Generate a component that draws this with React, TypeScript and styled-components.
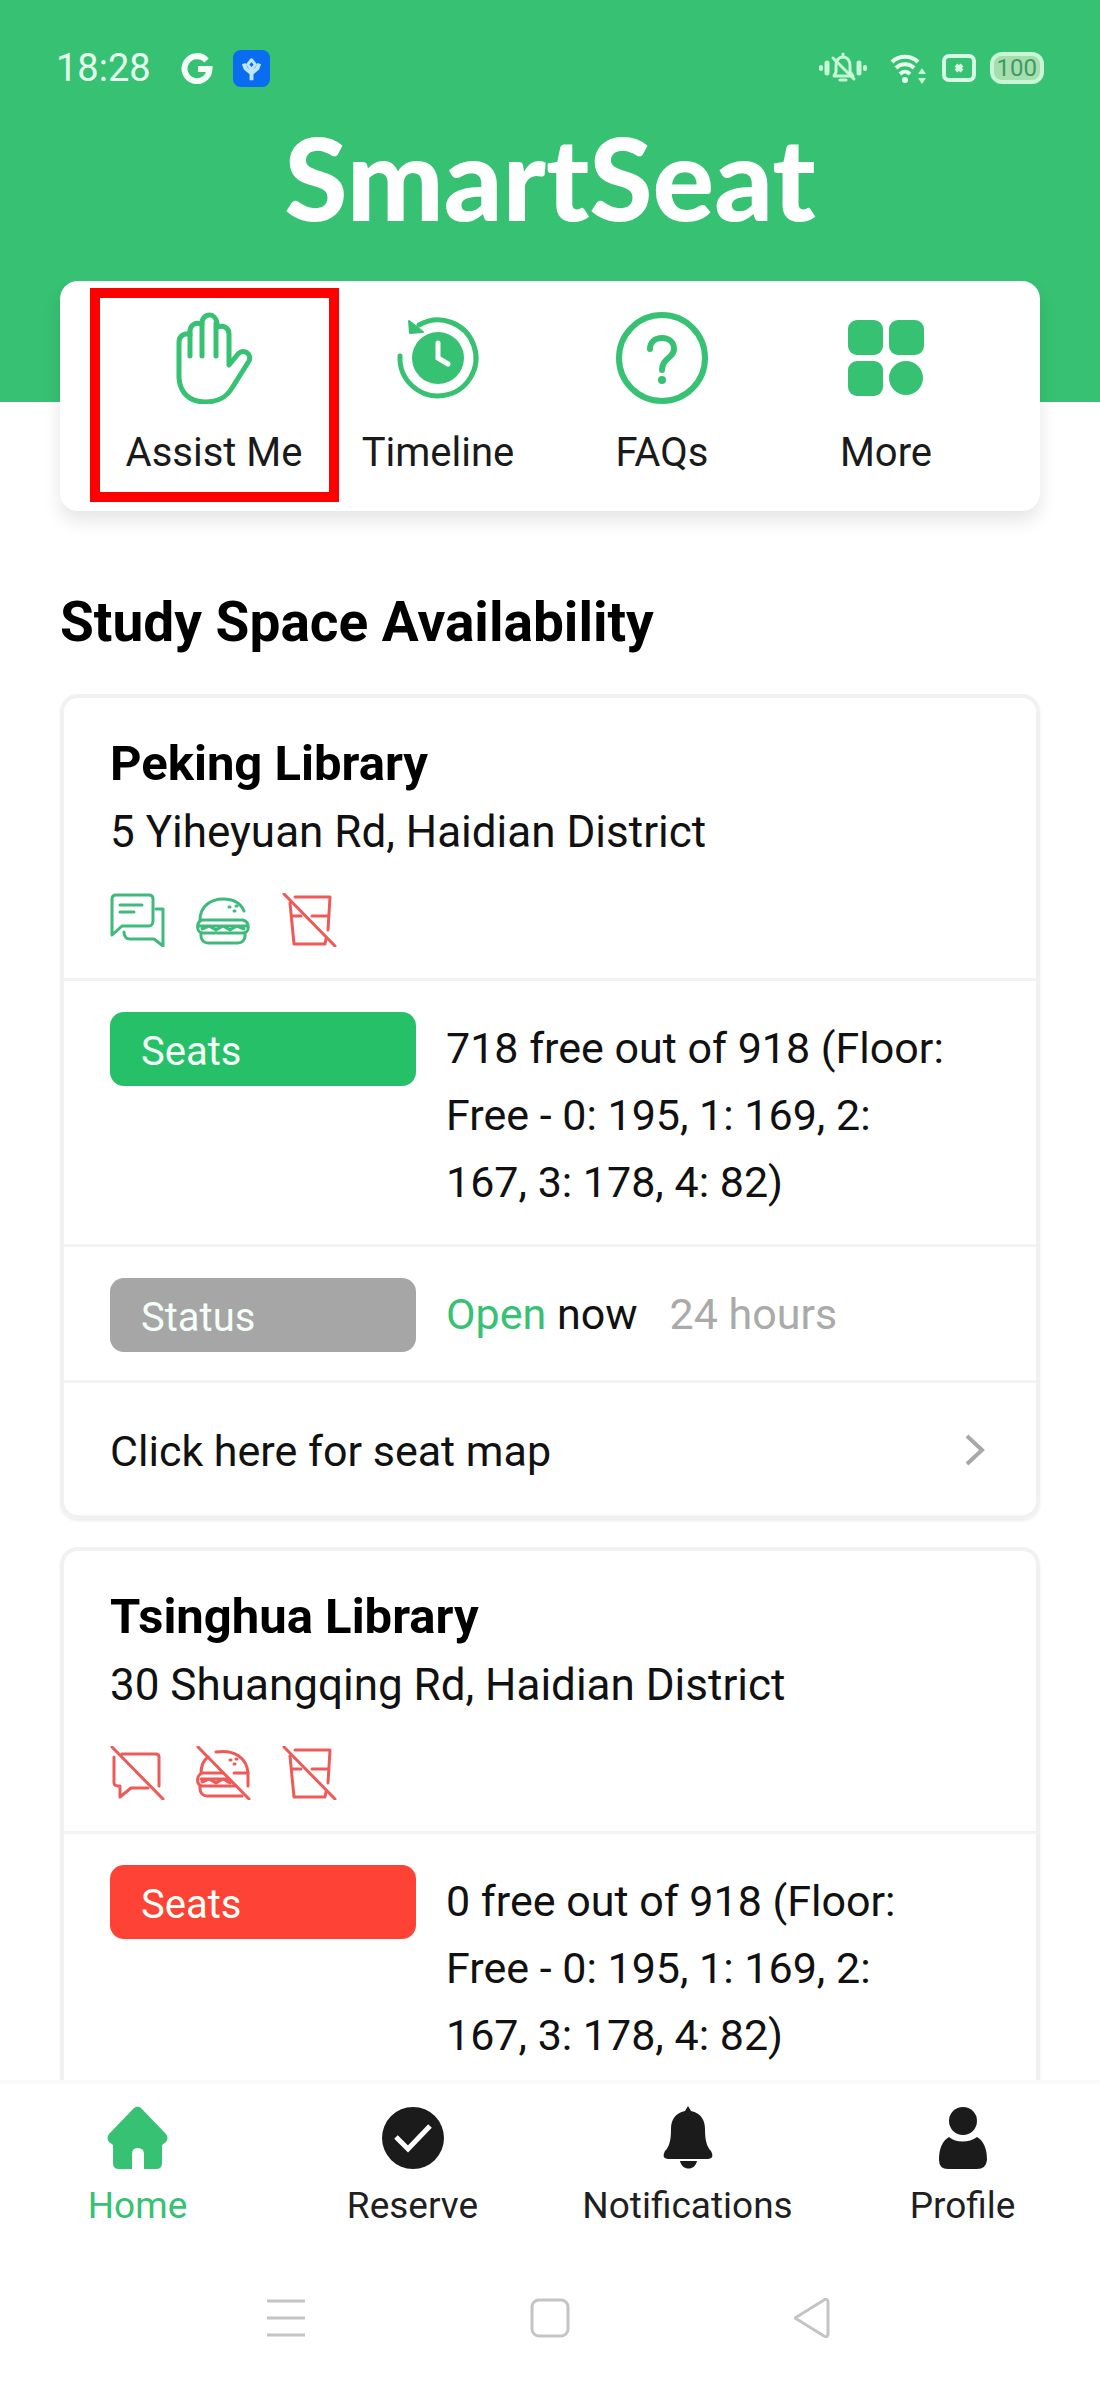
import React from 'react';
import styled, { createGlobalStyle } from 'styled-components';

const GREEN = '#37c173';
const RED = '#ff4236';

const GlobalStyle = createGlobalStyle`
  *, *::before, *::after { box-sizing: border-box; }
  body { margin: 0; background: #fff; color: #111; font-family: Roboto, "Liberation Sans", sans-serif; }
  h1, h2, h3, p { margin: 0; }
  svg { display: block; flex: none; }
`;

const Screen = styled.div`
  display: flex;
  flex-direction: column;
  height: 100vh;
  overflow: hidden;
`;

const Header = styled.header`
  flex: none;
  height: 402px;
  background: ${GREEN};
`;

const StatusBar = styled.div`
  display: flex;
  align-items: center;
  justify-content: space-between;
  padding: 32px 56px 0;
  height: 104px;
  color: #e6ffee;
`;

const StatusGroup = styled.div<{ $gap: number }>`
  display: flex;
  align-items: center;
  gap: ${(p) => p.$gap}px;
`;

const Clock = styled.span`
  margin-right: 10px;
  font-size: 38px;
  line-height: 48px;
`;

const Battery = styled.span`
  padding: 0 3px;
  border: 4px solid #c8f5d3;
  border-radius: 12px;
  background: #a5dfae;
  color: #3f9a60;
  font-size: 24px;
  line-height: 24px;
`;

const Brand = styled.h1`
  padding-top: 12px;
  color: #fff;
  font-family: Lato, Roboto, sans-serif;
  font-weight: 900;
  font-size: 115px;
  line-height: 120px;
  text-align: center;
`;

const Content = styled.main`
  flex: 1;
  min-height: 0;
  margin-top: -121px;
  padding: 0 60px;
  overflow: hidden;
`;

const QuickBar = styled.section`
  display: grid;
  grid-template-columns: repeat(4, 1fr);
  padding: 0 42px;
  border-radius: 18px;
  background: #fff;
  box-shadow: 0 10px 18px rgba(0, 0, 0, 0.1);
  clip-path: inset(0 -40px -40px -40px);
`;

const QuickButton = styled.button<{ $marked?: boolean }>`
  position: relative;
  display: flex;
  flex-direction: column;
  align-items: center;
  gap: 25px;
  padding: 31px 0 34px;
  border: 0;
  background: none;
  color: #1a1a1a;
  font: 400 40px/48px Roboto, sans-serif;
  white-space: nowrap;

  &::after {
    content: '';
    display: ${(p) => (p.$marked ? 'block' : 'none')};
    position: absolute;
    inset: 7px -13px 9px -12px;
    border: 10px solid #f00;
  }
`;

const Heading = styled.h2`
  margin: 79px 0 40px;
  color: #000;
  font-size: 55px;
  font-weight: 700;
  line-height: 64px;
`;

const CardList = styled.div`
  display: flex;
  flex-direction: column;
  gap: 28px;
`;

const Card = styled.article`
  border: 4px solid #f1f1f1;
  border-radius: 18px;
  box-shadow: 0 2px 3px rgba(0, 0, 0, 0.07);
`;

const CardHead = styled.div`
  padding: 36px 46px 31px;
`;

const CardTitle = styled.h3`
  margin-bottom: 8px;
  color: #000;
  font-size: 49px;
  font-weight: 700;
  line-height: 60px;
`;

const Address = styled.p`
  font-size: 44px;
  line-height: 60px;
`;

const Amenities = styled.div`
  display: flex;
  gap: 31px;
  margin-top: 31px;
`;

const InfoRow = styled.div`
  display: flex;
  align-items: flex-start;
  gap: 30px;
  padding: 31px 86px 28px 46px;
  border-top: 3px solid #f3f3f3;
`;

const Badge = styled.span<{ $color: string }>`
  flex: none;
  width: 306px;
  padding: 6px 31px 0;
  border-radius: 14px;
  background: ${(p) => p.$color};
  color: #f4fff7;
  font-size: 40px;
  line-height: 68px;
`;

const InfoText = styled.p`
  padding-top: 3px;
  font-size: 43px;
  line-height: 67px;
`;

const OpenWord = styled.span`
  color: ${GREEN};
`;

const Hours = styled.span`
  margin-left: 32px;
  color: #aaa;
`;

const MapLink = styled.a`
  display: flex;
  align-items: center;
  justify-content: space-between;
  padding: 38px 50px 34px 46px;
  border-top: 3px solid #f3f3f3;
  color: #111;
  font-size: 43px;
  line-height: 60px;
  text-decoration: none;
`;

const TabBar = styled.nav`
  display: grid;
  flex: none;
  grid-template-columns: repeat(4, 1fr);
  padding: 22px 0;
  border-top: 4px solid #fafafa;
  background: #fff;
`;

const Tab = styled.a<{ $active?: boolean }>`
  display: flex;
  flex-direction: column;
  align-items: center;
  gap: 15px;
  color: ${(p) => (p.$active ? GREEN : '#1f1f1f')};
  font-size: 37px;
  line-height: 44px;
  text-decoration: none;
`;

const SystemBar = styled.div`
  display: grid;
  flex: none;
  grid-template-columns: repeat(3, 1fr);
  height: 135px;
  padding: 0 14%;
`;

const SystemButton = styled.button`
  display: flex;
  align-items: center;
  justify-content: center;
  padding: 0;
  border: 0;
  background: none;
`;

/* ---- status bar icons ---- */

const GoogleMark = () => (
  <svg width="32" height="32" viewBox="0 0 32 32" fill="none" stroke="#f4fff7" strokeWidth="6">
    <path d="M25.5 8.5 A12.5 12.5 0 1 0 28.500 17 H17" />
  </svg>
);

const AppMark = () => (
  <svg width="37" height="37" viewBox="0 0 38 38">
    <rect width="38" height="38" rx="8" fill="#0a6cf0" />
    <path d="M19 10 l4 5 -4 5 -4 -5z" fill="none" stroke="#bfe6ff" strokeWidth="3" strokeLinejoin="round" />
    <path d="M19 20 V31 M11 14 L13 19 L19 24 L25 19 L27 14" fill="none" stroke="#bfe6ff" strokeWidth="4" strokeLinejoin="round" />
  </svg>
);

const MuteIcon = () => (
  <svg width="58" height="32" viewBox="0 0 58 32" fill="none" stroke="#c8f7d8" strokeWidth="3" strokeLinecap="round" strokeLinejoin="round">
    <path d="M16 24 H35 L32 20 V14 C32 8 29 5 25 5 C21 5 18 8 18 14 V20 Z" />
    <path d="M25 2 V5 M22 28 H28 M15 6 L36 27" />
    <path d="M9 11 V21 M41 11 V21" strokeWidth="5" />
    <path d="M3 15 V17 M47 15 V17" strokeWidth="4" />
  </svg>
);

const WifiIcon = () => (
  <svg width="38" height="32" viewBox="0 0 38 32" fill="none" stroke="#e6ffee" strokeWidth="4">
    <path d="M2 10 C9 3 21 3 28 10" />
    <path d="M6 16 C11 11 19 11 24 16" />
    <path d="M10 22 C13 19 17 19 20 22" />
    <circle cx="15" cy="28" r="3" fill="#e6ffee" stroke="none" />
    <path d="M32 16 l4 6 h-8z M32 32 l4 -6 h-8z" fill="#c8f7d8" stroke="none" />
  </svg>
);

const SimIcon = () => (
  <svg width="34" height="28" viewBox="0 0 34 28" fill="none" stroke="#d8fbe4" strokeWidth="4">
    <rect x="2" y="2" width="30" height="24" rx="5" />
    <path d="M14 11 l6 6 M20 11 l-6 6" />
  </svg>
);

/* ---- quick action icons ---- */

const HandIcon = () => (
  <svg width="76" height="92" viewBox="0 0 76 92" fill="none" stroke={GREEN} strokeWidth="5" strokeLinecap="round" strokeLinejoin="round">
    <path d="M14 44 V22 C8 21 3 24 3 30 V66 C4 81 14 90 29 90 C42 90 50 86 56 76 L73 49 C76 42 68 36 62 42 L53 53 V22 C53 16 48 13 41 15" />
    <path d="M14 23 V18 C15 13 19 10 26 12" />
    <path d="M26 44 V10 C27 5 30 3 34 3 C37 3 40 6 41 11" />
    <path d="M40 44 V11" />
  </svg>
);

const TimelineIcon = () => (
  <svg width="92" height="92" viewBox="0 0 92 92" fill="none" stroke={GREEN} strokeWidth="5" strokeLinecap="round">
    <path d="M8 44 A38 38 0 1 0 27 13" />
    <path d="M17 9 L18 21 L31 20 Z" fill={GREEN} strokeWidth="2" strokeLinejoin="round" />
    <circle cx="46" cy="46" r="26" fill={GREEN} stroke="none" />
    <path d="M46 31 V46 L56 52" stroke="#fff" />
  </svg>
);

const QuestionIcon = () => (
  <svg width="92" height="92" viewBox="0 0 92 92" fill="none" stroke={GREEN} strokeWidth="6" strokeLinecap="round">
    <circle cx="46" cy="46" r="43" />
    <path d="M34 37 C34 30 39 26 46 26 C53 26 58 30 58 37 C58 46 46 46 46 58" />
    <circle cx="46" cy="68" r="4" fill={GREEN} stroke="none" />
  </svg>
);

const MoreIcon = () => (
  <svg width="92" height="92" viewBox="0 0 92 92" fill={GREEN}>
    <rect x="8" y="8" width="35" height="35" rx="9" />
    <rect x="49" y="8" width="35" height="35" rx="9" />
    <rect x="8" y="49" width="35" height="35" rx="9" />
    <circle cx="66" cy="66" r="17" />
  </svg>
);

/* ---- amenity icons ---- */

const AmenitySvg = styled.svg.attrs({ width: 55, height: 54, viewBox: '0 0 55 54' })<{ $off?: boolean }>`
  fill: none;
  stroke: ${(p) => (p.$off ? '#ee5a58' : '#3fba7c')};
  stroke-width: 3;
  stroke-linecap: round;
  stroke-linejoin: round;
`;

const Slash = () => <path d="M2 1 L53 53" />;

const ChatIcon = () => (
  <AmenitySvg>
    <path d="M2 42 V6 C2 3 4 2 6 2 H39 C42 2 43 4 43 6 V28 C43 31 41 33 39 33 H12 Z" />
    <path d="M10 12 H32 M10 19 H24" />
    <path d="M46 16 H53 V53 L44 46 H20 C16 46 14 43 14 39" />
  </AmenitySvg>
);

const NoChatIcon = () => (
  <AmenitySvg $off>
    <path d="M12 8 H46 C48 8 49 9 49 11 V40" />
    <path d="M4 11 V37 C4 39 6 40 10 40 V51 L21 42 H38" />
    <Slash />
  </AmenitySvg>
);

const BurgerShape = () => (
  <>
    <path d="M4 27 C4 13 15 6 27 6 C38 6 45 11 48 18" />
    <path d="M33 14 h1 M38 18 h1 M40 13 h1" />
    <path d="M6 27 H47 C54 29 54 40 47 40 H7 C0 40 0 29 6 27 Z" />
    <path d="M3 33 H51 M6 36 L13 33 L20 37 L27 33 L34 37 L41 33 L48 36" />
    <path d="M5 40 V43 C5 47 8 50 12 50 H42 C46 50 49 47 49 43 V40" />
  </>
);

const BurgerIcon = () => (
  <AmenitySvg>
    <BurgerShape />
  </AmenitySvg>
);

const NoBurgerIcon = () => (
  <AmenitySvg $off>
    <path d="M5 27 C5 20 8 14 12 11 M20 6 C38 3 51 12 52 27 V40" />
    <path d="M34 14 h1 M38 18 h1 M40 13 h1" />
    <path d="M6 27 H27 M38 27 H52 M6 27 C0 30 0 38 6 40 H40" />
    <path d="M5 33 H33 M6 36 L13 33 L20 37 L27 33 L34 37" />
    <path d="M4 40 V43 C4 47 7 50 11 50 H46" />
    <Slash />
  </AmenitySvg>
);

const NoDrinkIcon = () => (
  <AmenitySvg $off>
    <path d="M13 4 H48 L46 37 M8 10 L12 51 H43 L44 46" />
    <path d="M10 23 H19 M30 23 H46" />
    <Slash />
  </AmenitySvg>
);

const Chevron = () => (
  <svg width="22" height="34" viewBox="0 0 22 34" fill="none" stroke="#a8a8a8" strokeWidth="4">
    <path d="M3 2 L18 16 L3 30" />
  </svg>
);

/* ---- tab bar icons ---- */

const HomeIcon = () => (
  <svg width="63" height="63" viewBox="0 0 63 63" fill={GREEN}>
    <path d="M28 2 Q31.500 -1 35 2 L60 28 Q63 32 60 36 L56 39 V57 Q56 63 50 63 H38 V48 Q38 42 31.500 42 Q26 42 26 48 V63 H13 Q7 63 7 57 V39 L3 36 Q0 32 3 28 Z" />
  </svg>
);

const ReserveIcon = () => (
  <svg width="63" height="63" viewBox="0 0 63 63">
    <circle cx="32" cy="32" r="31" fill="#1b1b1b" />
    <path d="M15 31 L27 43 L49 20" fill="none" stroke="#fff" strokeWidth="5" />
  </svg>
);

const BellIcon = () => (
  <svg width="63" height="63" viewBox="0 0 63 63" fill="#1b1b1b">
    <path d="M32 0 L35 5 C45 7 49 14 49 23 C49 35 51 41 55 45 Q59 52 52 53 H12 Q5 52 9 45 C13 41 15 35 15 23 C15 14 19 7 29 5 Z" />
    <path d="M24 55 H41 C39 65 26 65 24 55 Z" />
  </svg>
);

const ProfileIcon = () => (
  <svg width="63" height="63" viewBox="0 0 63 63" fill="#1b1b1b">
    <circle cx="32" cy="15" r="14" />
    <path d="M18 31 C25 37 38 37 46 31 C53 35 56 43 56 54 Q55 63 46 63 H17 Q8 63 8 54 C8 43 11 35 18 31 Z" />
  </svg>
);

/* ---- system navigation icons ---- */

const SystemSvg = styled.svg.attrs({ width: 40, height: 40, viewBox: '0 0 40 40' })`
  fill: none;
  stroke: #c4c4c4;
  stroke-width: 3;
  stroke-linejoin: round;
`;

type Library = {
  name: string;
  address: string;
  amenities: React.ReactNode;
  seats: string;
  seatColor: string;
  details?: boolean;
};

const floors = '(Floor: Free - 0: 195, 1: 169, 2: 167, 3: 178, 4: 82)';

const libraries: Library[] = [
  {
    name: 'Peking Library',
    address: '5 Yiheyuan Rd, Haidian District',
    amenities: (
      <>
        <ChatIcon />
        <BurgerIcon />
        <NoDrinkIcon />
      </>
    ),
    seats: `718 free out of 918 ${floors}`,
    seatColor: '#26c069',
    details: true,
  },
  {
    name: 'Tsinghua Library',
    address: '30 Shuangqing Rd, Haidian District',
    amenities: (
      <>
        <NoChatIcon />
        <NoBurgerIcon />
        <NoDrinkIcon />
      </>
    ),
    seats: `0 free out of 918 ${floors}`,
    seatColor: RED,
  },
];

const LibraryCard = ({ library }: { library: Library }) => (
  <Card>
    <CardHead>
      <CardTitle>{library.name}</CardTitle>
      <Address>{library.address}</Address>
      <Amenities>{library.amenities}</Amenities>
    </CardHead>
    <InfoRow>
      <Badge $color={library.seatColor}>Seats</Badge>
      <InfoText>{library.seats}</InfoText>
    </InfoRow>
    {library.details && (
      <>
        <InfoRow>
          <Badge $color="#a6a6a6">Status</Badge>
          <InfoText>
            <OpenWord>Open</OpenWord> now<Hours>24 hours</Hours>
          </InfoText>
        </InfoRow>
        <MapLink href="#seat-map">
          Click here for seat map
          <Chevron />
        </MapLink>
      </>
    )}
  </Card>
);

export default function App() {
  return (
    <>
      <GlobalStyle />
      <Screen>
        <Header>
          <StatusBar>
            <StatusGroup $gap={20}>
              <Clock>18:28</Clock>
              <GoogleMark />
              <AppMark />
            </StatusGroup>
            <StatusGroup $gap={14}>
              <MuteIcon />
              <WifiIcon />
              <SimIcon />
              <Battery>100</Battery>
            </StatusGroup>
          </StatusBar>
          <Brand>SmartSeat</Brand>
        </Header>
        <Content>
          <QuickBar>
            <QuickButton type="button" $marked>
              <HandIcon />
              Assist Me
            </QuickButton>
            <QuickButton type="button">
              <TimelineIcon />
              Timeline
            </QuickButton>
            <QuickButton type="button">
              <QuestionIcon />
              FAQs
            </QuickButton>
            <QuickButton type="button">
              <MoreIcon />
              More
            </QuickButton>
          </QuickBar>
          <Heading>Study Space Availability</Heading>
          <CardList>
            {libraries.map((library) => (
              <LibraryCard key={library.name} library={library} />
            ))}
          </CardList>
        </Content>
        <TabBar>
          <Tab href="#home" $active>
            <HomeIcon />
            Home
          </Tab>
          <Tab href="#reserve">
            <ReserveIcon />
            Reserve
          </Tab>
          <Tab href="#notifications">
            <BellIcon />
            Notifications
          </Tab>
          <Tab href="#profile">
            <ProfileIcon />
            Profile
          </Tab>
        </TabBar>
        <SystemBar>
          <SystemButton type="button" aria-label="Recent apps">
            <SystemSvg>
              <path d="M1 3 H39 M1 20 H39 M1 37 H39" />
            </SystemSvg>
          </SystemButton>
          <SystemButton type="button" aria-label="Home screen">
            <SystemSvg>
              <rect x="2" y="2" width="36" height="36" rx="7" />
            </SystemSvg>
          </SystemButton>
          <SystemButton type="button" aria-label="Back">
            <SystemSvg>
              <path d="M1 20 L30 2 Q34 0 34 4 V36 Q34 40 30 38 Z" />
            </SystemSvg>
          </SystemButton>
        </SystemBar>
      </Screen>
    </>
  );
}
